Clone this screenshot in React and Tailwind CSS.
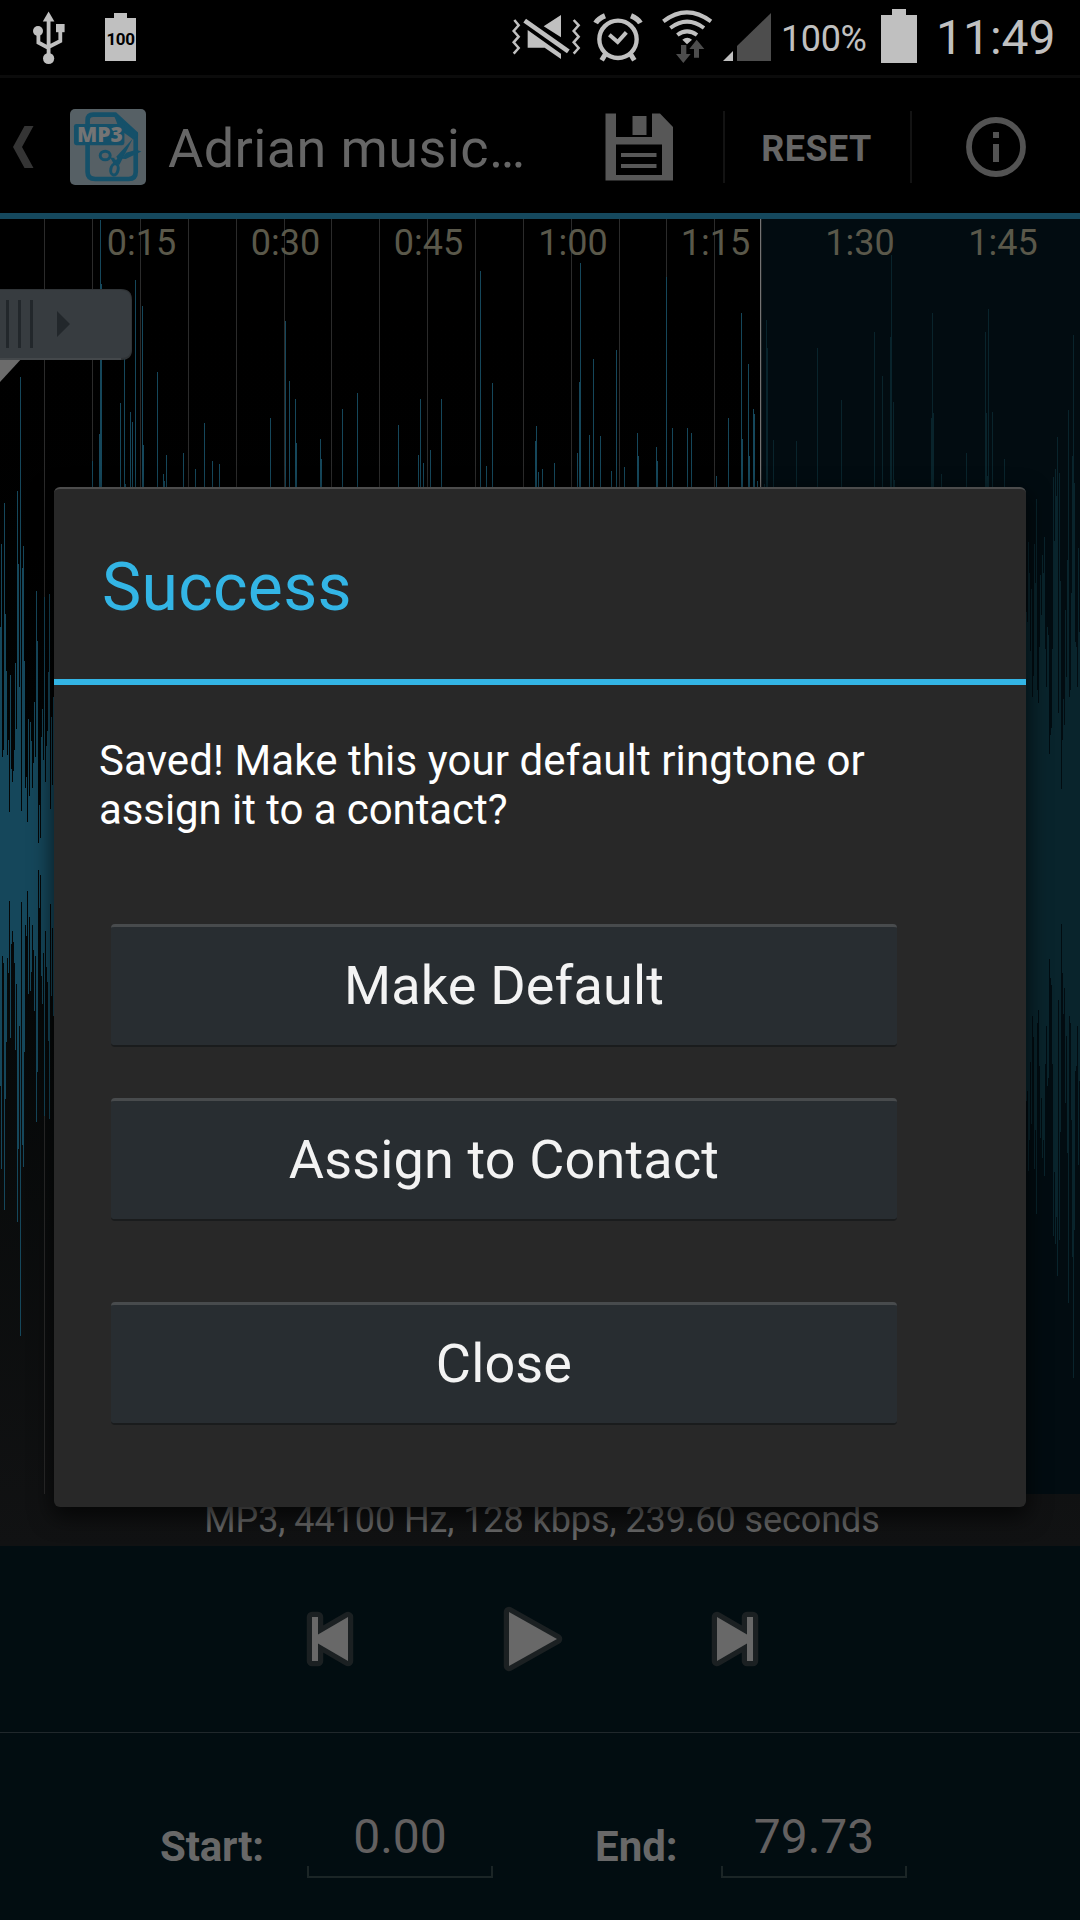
import React from "react";

const CENTER_Y = 856.5;

// Peaks are [x, top] pairs; each one is mirrored around the centre line.
const LEFT_EDGE = [
  217, 95, 410, 400, 34, 198, 283, 407, 385, 491, 288, 427, 447, 430, 400, 271, 368, 16, 124, 306, -153, 490, 130, 98,
  268, 456, 439, 506, 354, 467, 358, 386, 456, 418, 328, 410, 164, 238, 537, 481, 530, 380, 339, 414, 173, 447, 393,
  371, 284, 169, 487, 351, 451, 321,
].map((v, i) => [i, 480 + v / 1.479]);

const RIGHT_EDGE = [
  195, 210, 91, 138, 253, 161, 321, 290, 94, 152, 28, 311, 330, 247, 141, 200, 111, 138, 84, 250, 306, 217, 229, 405,
  377, 367, 250, -5, 90, -16, 24, -64, 345, -10, 149, 457, 385, 324, 363, 192, 292, 118, -104, 321, 311, 167, -35,
  -214, 4, 240, 247, 306, 101, 225,
].map((v, i) => [1026 + i, 480 + v / 1.479]);

const SELECTED_PEAKS = [
  [92, 461], [99, 434], [100, 220], [101, 284], [120, 403], [124, 300], [125, 484], [130, 412], [132, 422], [135, 280],
  [142, 306], [143, 445], [157, 372], [163, 474], [164, 481], [166, 455], [183, 453], [195, 469], [204, 423],
  [212, 461], [219, 464], [270, 418], [285, 321], [289, 381], [295, 399], [296, 443], [320, 439], [321, 459],
  [342, 409], [357, 393], [398, 425], [418, 455], [420, 399], [423, 463], [430, 450], [441, 399], [480, 271],
  [486, 466], [492, 383], [535, 441], [536, 426], [538, 472], [542, 469], [554, 463], [577, 453], [579, 382],
  [580, 263], [589, 435], [593, 359], [600, 436], [611, 471], [616, 350], [624, 467], [637, 433], [638, 456],
  [656, 447], [657, 461], [666, 277], [672, 428], [687, 428], [691, 433], [716, 476], [728, 418], [741, 313],
  [742, 439], [748, 364], [749, 456], [753, 409], [754, 414], [757, 481],
];

const UNSELECTED_PEAKS = [
  [764, 484], [766, 320], [767, 348], [773, 440], [796, 441], [817, 348], [841, 400], [874, 332], [882, 376],
  [890, 337], [891, 255], [893, 402], [894, 480], [931, 418], [932, 313], [933, 413], [941, 474], [966, 453],
  [985, 332], [986, 413], [987, 476], [988, 309], [992, 412], [1004, 459],
];

const GRID_LINES = [44, 92, 140, 188, 236, 284, 331, 379, 427, 475, 523, 571, 619, 666, 714];

const TIMECODES = [
  ["0:15", 141.5], ["0:30", 285.5], ["0:45", 428.5], ["1:00", 573],
  ["1:15", 715.5], ["1:30", 860], ["1:45", 1003],
];

const toPath = (peaks) => peaks.map(([x, top]) => `M${x} ${top}h1V${2 * CENTER_Y - top}h-1z`).join("");

function Waveform() {
  return (
    <svg className="block h-[1275px] w-[1080px] shrink-0" viewBox="0 219 1080 1275" shapeRendering="crispEdges">
      <rect x="760" y="219" width="320" height="1275" fill="#020c11" />
      {GRID_LINES.map((x) => (
        <rect key={x} x={x} y="219" width="1" height="1275" fill="#2b2b2b" />
      ))}
      <path d={toPath([...LEFT_EDGE, ...SELECTED_PEAKS])} fill="#15475b" />
      <path d={toPath([...UNSELECTED_PEAKS, ...RIGHT_EDGE])} fill="#09242c" />
      <rect x="760" y="219" width="1" height="1275" fill="#747474" />
      <rect x="761" y="219" width="1" height="1275" fill="#1c2022" />
      <g fill="#5a584a" textAnchor="middle" className="font-[Roboto] text-[36px]">
        {TIMECODES.map(([label, x]) => (
          <text key={label} x={x} y="255">{label}</text>
        ))}
      </g>
      <g shapeRendering="auto">
        <path d="M0 357H23L0 382z" fill="#6b6b6b" />
        <path d="M0 289H121Q132 289 132 300V350Q132 360 121 360H0z" fill="#303437" />
        <path d="M0 290H121Q131 290 131 300V349Q131 358 121 358H0z" fill="#373c40" />
        <path d="M0 358H121V360H0z" fill="#44484b" />
        <path d="M6 300h3v48h-3zM18 300h3v48h-3zM30 300h3v48h-3zM57 311L70 324 57 337z" fill="#22272b" />
      </g>
    </svg>
  );
}

function StatusBar() {
  return (
    <div className="flex h-[78px] shrink-0 items-start border-b-[3px] border-[#0b0b0b] bg-black text-[#c0c0c0]">
      <svg className="ml-[32px] h-[75px] w-[34px]" viewBox="32 0 34 75" fill="currentColor">
        <path d="M48.6 11.5L54.4 21.5H42.8z" />
        <circle cx="48.6" cy="58.5" r="5.6" />
        <circle cx="38" cy="31" r="5" />
        <rect x="56" y="24" width="8.6" height="8.2" />
        <path d="M48.6 20V56M38.4 32V42.5L48.6 48M60.3 31V41L48.6 47" fill="none" stroke="currentColor" strokeWidth="3.8" />
      </svg>
      <div className="ml-[39px] mt-[13px] flex flex-col items-center">
        <div className="h-[5px] w-[13px] bg-[#c0c0c0]" />
        <div className="flex h-[43px] w-[31px] items-center justify-center bg-[#c0c0c0] text-[17px] leading-none font-bold tracking-[-0.4px] text-black">
          100
        </div>
      </div>
      <div className="grow" />
      <svg className="h-[65px] w-[76px]" viewBox="15 -15 228 195" fill="currentColor">
        <path d="M28 45L41 61 26 78 41 95 26 112 41 129 26 146M206 45L221 61 206 78 221 95 206 112 221 129 206 146" fill="none" stroke="currentColor" strokeWidth="7.5" />
        <path d="M168 30V97L116 64zM68 75L168 146V162L119 128H68z" />
        <path d="M59 47L190 139" fill="none" stroke="currentColor" strokeWidth="14" />
      </svg>
      <svg className="ml-[5px] h-[65px] w-[54px]" viewBox="258 -15 162 195" fill="none" stroke="currentColor">
        <circle cx="339" cy="103" r="56" strokeWidth="13" />
        <path d="M313 89L338 111 364 82" strokeWidth="12" />
        <path d="M272 54Q280 40 300 32M406 54Q398 40 378 32" strokeWidth="16" />
        <path d="M302 146L290 166M376 146L388 166" strokeWidth="15" />
      </svg>
      <svg className="ml-[15px] h-[65px] w-[54px]" viewBox="465 -15 162 195" fill="none" stroke="currentColor">
        <path d="M475 49Q545 -5 618 49" strokeWidth="12" />
        <path d="M496 69Q546 31 597 69" strokeWidth="12" />
        <path d="M517 90Q546 68 576 90" strokeWidth="12" />
        <path d="M532 104Q547 92 561 104L546 118z" fill="currentColor" stroke="none" />
        <path d="M528 120H544V147H557L535 174 513 147H528zM567 158V132H553L575 104 598 132H582V158z" fill="#4d4d4d" stroke="none" />
      </svg>
      <svg className="ml-[8px] h-[75px] w-[50px]" viewBox="722 0 50 75" fill="currentColor">
        <path d="M723 61H733V51z" />
        <path d="M771 13V61H737V46z" fill="#4d4d4d" />
      </svg>
      <div className="ml-[9px] mt-[21px] w-[88px] text-[36px] leading-[36px] tracking-[-0.4px] whitespace-nowrap">100%</div>
      <div className="ml-[12px] mt-[9px] flex flex-col items-center">
        <div className="h-[6px] w-[14px] bg-[#c0c0c0]" />
        <div className="h-[48px] w-[36px] bg-[#c0c0c0]" />
      </div>
      <div className="mt-[14px] ml-[19px] w-[144px] text-[48px] leading-[48px] whitespace-nowrap">11:49</div>
    </div>
  );
}

function ActionBar() {
  return (
    <header className="flex h-[141px] shrink-0 items-center border-b-[6px] border-[#15485d] bg-black pt-[3px]">
      <svg className="ml-[13px] h-[42px] w-[21px]" viewBox="13 126 21 42" fill="#343434">
        <path d="M24.5 126H33.5L22 147 33.5 168H24.5L13 147z" />
      </svg>
      <svg className="ml-[36px] h-[76px] w-[76px]" viewBox="14 14 229 229">
        <rect x="14" y="14" width="229" height="229" rx="15" fill="#566065" />
        <g fill="none" stroke="#155069">
          <path d="M67 60V48Q67 31 84 31H150L212 88V204Q212 225 191 225H90Q67 225 67 204V120" strokeWidth="14" />
          <ellipse cx="120" cy="154" rx="15" ry="13" strokeWidth="9" />
          <ellipse cx="148" cy="196" rx="11" ry="17" strokeWidth="9" transform="rotate(12 148 196)" />
        </g>
        <path d="M145 25L220 92 205 106 175 84 160 68 150 42z" fill="#155069" />
        <rect x="26" y="59" width="152" height="64" rx="7" fill="#155069" />
        <path d="M203 104L163 182 147 181 135 160 150 162z" fill="#155069" />
        <path d="M229 142L182 165 170 164 183 146 214 137z" fill="#155069" />
        <circle cx="152" cy="163" r="4" fill="#566065" />
        <text x="104" y="112" textAnchor="middle" textLength="138" lengthAdjust="spacingAndGlyphs" fill="#747474" className="font-['Open_Sans'] text-[64px] font-extrabold">
          MP3
        </text>
      </svg>
      <h1 className="ml-[22px] w-[437px] pt-[4px] text-[54px] leading-[60px] font-normal tracking-[0.4px] whitespace-nowrap text-[#666]">
        Adrian music…
      </h1>
      <svg className="h-[68px] w-[68px]" viewBox="605 113 68 68" fill="#575757">
        <path fillRule="evenodd" d="M605.5 113.5H616V137H652V113.5H660L673 127V180.5H605.5zM616 144.5V175H662V144.5z" />
        <path d="M632.5 116H646.5V135H632.5zM621 153H656.5V157H621zM621 164H656.5V168H621z" />
      </svg>
      <div className="ml-[50px] h-[72px] w-[2px] bg-[#131313]" />
      <div className="w-[185px] pt-[3px] pr-[2px] text-center text-[36px] leading-none font-bold tracking-[0.4px] text-[#666]">RESET</div>
      <div className="h-[72px] w-[2px] bg-[#131313]" />
      <svg className="ml-[54px] h-[60px] w-[60px]" viewBox="0 0 60 60">
        <circle cx="30" cy="30" r="27" fill="none" stroke="#535353" strokeWidth="5.8" />
        <path d="M27 15H33V21H27zM27 27H33V45H27z" fill="#535353" />
      </svg>
    </header>
  );
}

function ControlIcon({ d, viewBox, className }) {
  return (
    <svg className={className} viewBox={viewBox}>
      <path d={d} fill="#1b2022" stroke="#1b2022" strokeWidth="10.5" strokeLinejoin="round" />
      <path d={d} fill="#686868" />
    </svg>
  );
}

function Transport() {
  return (
    <div className="flex h-[187px] shrink-0 items-center border-b border-[#20282c]">
      <ControlIcon className="ml-[306px] h-[58px] w-[48px]" viewBox="306 1610 48 58" d="M312 1617H318V1634.500L348 1617V1661L318 1643.500V1661H312z" />
      <ControlIcon className="ml-[149px] h-[66px] w-[62px]" viewBox="503 1606 62 66" d="M509 1612L557 1639 509 1666z" />
      <ControlIcon className="ml-[146px] h-[58px] w-[48px]" viewBox="711 1610 48 58" d="M717 1617L747 1634.500V1617H753V1661H747V1643.500L717 1661z" />
    </div>
  );
}

function TimeField({ value }) {
  return (
    <div className="flex w-[186px] flex-col">
      <div className="text-center text-[48px] leading-[58px] text-[#636060]">{value}</div>
      <div className="h-[12px] border-x-2 border-b-2 border-[#1b2526]" />
    </div>
  );
}

function DialogButton({ children, className }) {
  return (
    <button
      className={`flex h-[123px] w-[786px] items-center justify-center rounded-[4px] border-t-[3px] border-b-2 border-t-[#484b4d] border-b-[#1a1c1d] bg-[#282d31] pb-px text-[54px] leading-none tracking-[0.15px] text-[#f3f3f3] ${className}`}
    >
      {children}
    </button>
  );
}

function SuccessDialog() {
  return (
    <section className="absolute top-[487px] left-[54px] flex h-[1020px] w-[972px] flex-col rounded-[6px] border-t-2 border-t-[#4c4c4c] bg-[#282828] shadow-[0_8px_22px_2px_rgba(0,0,0,0.65)]">
      <div className="flex h-[196px] shrink-0 items-center border-b-[6px] border-[#33b5e5] pl-[48px]">
        <h2 className="pt-[7px] text-[66px] leading-none font-normal tracking-[0.3px] text-[#33b5e5]">Success</h2>
      </div>
      <p className="mt-[51px] ml-[45px] text-[42px] leading-[49px] whitespace-nowrap text-white">
        <span className="tracking-[0.1px]">Saved! Make this your default ringtone or</span>
        <br />
        <span className="tracking-[-0.08px]">assign it to a contact?</span>
      </p>
      <div className="mt-[90px] ml-[57px] flex flex-col">
        <DialogButton className="">Make Default</DialogButton>
        <DialogButton className="mt-[51px]">Assign to Contact</DialogButton>
        <DialogButton className="mt-[81px]">Close</DialogButton>
      </div>
    </section>
  );
}

export default function App() {
  return (
    <div className="relative flex h-[1920px] w-[1080px] flex-col overflow-hidden bg-black font-[Roboto,sans-serif]">
      <StatusBar />
      <ActionBar />
      <div className="flex h-[1327px] shrink-0 flex-col bg-linear-to-b from-[#000000] via-[#040606] via-45% to-[#111213]">
        <Waveform />
        <div className="pt-[4px] text-center text-[36px] leading-[44px] tracking-[-0.07px] whitespace-nowrap text-[#666]">
          <span className="relative left-[2px]">MP3, 44100 Hz, 128 kbps, 239.60 seconds</span>
        </div>
      </div>
      <div className="flex grow flex-col bg-[#020d11]">
        <Transport />
        <div className="flex pt-[75px]">
          <div className="ml-[160px] w-[147px] pt-[11px] text-[42px] leading-[56px] font-bold tracking-[-0.2px] text-[#686868]">Start:</div>
          <TimeField value="0.00" />
          <div className="ml-[102px] w-[126px] pt-[11px] text-[42px] leading-[56px] font-bold text-[#686868]">End:</div>
          <TimeField value="79.73" />
        </div>
      </div>
      <SuccessDialog />
    </div>
  );
}
